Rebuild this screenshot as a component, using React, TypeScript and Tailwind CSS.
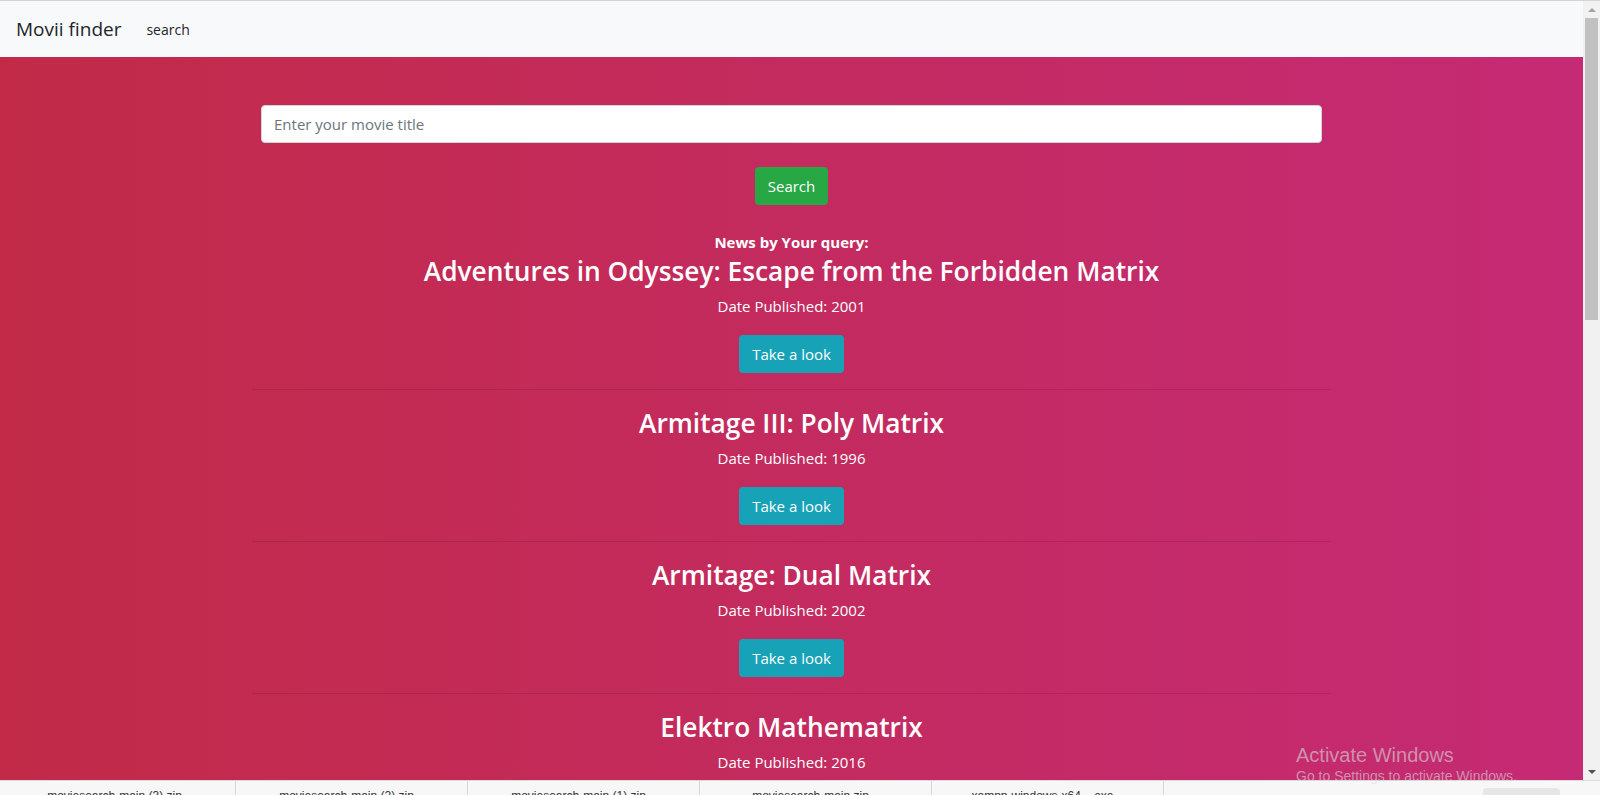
import React from "react";

const movies = [
  { title: "Adventures in Odyssey: Escape from the Forbidden Matrix", year: "2001" },
  { title: "Armitage III: Poly Matrix", year: "1996" },
  { title: "Armitage: Dual Matrix", year: "2002" },
  { title: "Elektro Mathematrix", year: "2016" },
];

const downloads = [
  "moviesearch-main (3).zip",
  "moviesearch-main (2).zip",
  "moviesearch-main (1).zip",
  "moviesearch-main.zip",
  "xampp-windows-x64....exe",
];

function MovieItem({ title, year, first }: { title: string; year: string; first: boolean }) {
  return (
    <div className="w-full flex flex-col items-center">
      {!first && <div className="w-full h-px bg-black/10 mt-[16px]" />}
      <h3
        className={`h-[34px] leading-[34px] text-[26.3px] font-semibold text-white ${
          first ? "" : "mt-[16px]"
        }`}
      >
        {title}
      </h3>
      <p className="mt-[6px] h-[24px] leading-[24px] text-[15px] text-white">
        Date Published: {year}
      </p>
      <button className="mt-[17px] h-[38px] px-[13px] rounded bg-[#17a2b8] text-white text-[15px]">
        Take a look
      </button>
    </div>
  );
}

export default function App() {
  return (
    <div className="relative h-[795px] w-full overflow-hidden flex flex-col font-['Open_Sans','Noto_Sans',sans-serif] bg-white">
      <div className="h-px bg-[#d3d3d3]" />
      <div className="flex flex-1 min-h-0">
        {/* page */}
        <div className="flex-1 min-w-0 flex flex-col overflow-hidden">
          <nav className="h-[56px] shrink-0 bg-[#f8f9fa] flex items-center px-4 gap-[25px]">
            <span className="text-[19px] text-[#212529]">Movii finder</span>
            <span className="text-[14px] text-[#212529]">search</span>
          </nav>
          <main className="flex-1 bg-gradient-to-r from-[#c22a48] to-[#c52a74]">
            <div className="mx-auto w-[1079px] flex flex-col items-center pt-[48px]">
              <input
                placeholder="Enter your movie title"
                className="w-[1061px] h-[38px] rounded bg-white border border-[#ced4da] px-3 text-[15px] text-[#495057] placeholder:text-[#6c757d] outline-none"
              />
              <button className="mt-[24px] h-[38px] w-[73px] rounded bg-[#28a745] text-white text-[15px]">
                Search
              </button>
              <p className="mt-[25px] h-[24px] leading-[24px] text-[15px] font-bold text-white">
                News by Your query:
              </p>
              {movies.map((m, i) => (
                <MovieItem key={m.title} title={m.title} year={m.year} first={i === 0} />
              ))}
            </div>
          </main>
        </div>

        {/* scrollbar */}
        <div className="w-[17px] shrink-0 bg-[#f1f1f1] flex flex-col items-center">
          <div className="h-[17px] flex items-center justify-center">
            <div className="w-0 h-0 border-l-[4px] border-r-[4px] border-b-[4px] border-l-transparent border-r-transparent border-b-[#a3a3a3]" />
          </div>
          <div className="w-[13px] h-[302px] bg-[#c1c1c1]" />
          <div className="flex-1" />
          <div className="h-[17px] flex items-center justify-center">
            <div className="w-0 h-0 border-l-[4px] border-r-[4px] border-t-[4px] border-l-transparent border-r-transparent border-t-[#505050]" />
          </div>
        </div>
      </div>

      {/* downloads bar */}
      <div className="h-[15px] shrink-0 bg-[#f7f7f7] border-t border-[#dadada] flex items-start pl-[4px] font-['Liberation_Sans',sans-serif]">
        {downloads.map((d) => (
          <div
            key={d}
            className="w-[232px] h-[40px] border-r border-[#d6d6d6] flex justify-center pt-[6px] pr-[10px] text-[12px] text-[#333]"
          >
            {d}
          </div>
        ))}
        <div className="flex-1" />
        <div className="w-[77px] h-[20px] mt-[7px] mr-[40px] rounded-sm bg-[#e6e6e6]" />
      </div>

      {/* watermark */}
      <div className="absolute left-[1296px] top-[742px] pointer-events-none text-[rgba(215,215,215,0.6)] font-['Liberation_Sans',sans-serif]">
        <div className="text-[20px] leading-[26px]">Activate Windows</div>
        <div className="text-[14px] leading-[17px]">Go to Settings to activate Windows.</div>
      </div>
    </div>
  );
}
